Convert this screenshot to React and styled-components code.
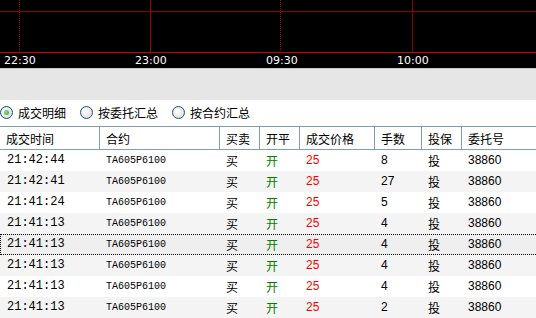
import React from 'react';
import styled, { createGlobalStyle } from 'styled-components';

const GlobalStyle = createGlobalStyle`
    body {
        margin: 0;
        background: #fff;
        overflow: hidden;
        font-family: "Liberation Sans", "Noto Sans CJK SC", sans-serif;
    }
`;

const Page = styled.div`
    width: 536px;
    height: 318px;
    overflow: hidden;
    display: flex;
    flex-direction: column;
`;

const Chart = styled.div`
    background: #000;
    display: flex;
    flex-direction: column;
    svg {
        display: block;
    }
`;

const Axis = styled.div`
    display: flex;
    height: 15px;
    align-items: center;
    padding-left: 4px;
    color: #fff;
    font-family: "DejaVu Sans", sans-serif;
    font-size: 11px;
    span {
        width: 131px;
        flex: none;
    }
`;

const Strip = styled.div`
    height: 31px;
    border-top: 1px solid #c8c8c8;
    background: #e6e6e6;
`;

const Radios = styled.div`
    height: 27px;
    display: flex;
    align-items: center;
    gap: 14px;
    font-size: 12px;
    font-family: "Noto Sans CJK SC", sans-serif;
`;

const RadioItem = styled.label`
    display: flex;
    align-items: center;
    gap: 5px;
`;

const RadioDot = styled.span`
    width: 11px;
    height: 11px;
    border-radius: 50%;
    border: 1px solid #1c5180;
    background: radial-gradient(circle at 40% 40%, #fff 0%, #e2e2dc 70%, #c9c9c0 100%);
    display: flex;
    align-items: center;
    justify-content: center;
    &::after {
        content: '';
        width: 5px;
        height: 5px;
        border-radius: 50%;
        background: ${p => (p.$on ? 'radial-gradient(circle at 40% 40%, #8fe28f, #21a121)' : 'transparent')};
    }
`;

const cols = '100px 120px 40px 40px 75px 47px 40px 74px';

const Header = styled.div`
    display: grid;
    grid-template-columns: ${cols};
    height: 22px;
    border-top: 1px solid #7f9db9;
    border-bottom: 1px solid #7f9db9;
    font-size: 12px;
    font-family: "Noto Sans CJK SC", sans-serif;
`;

const HeadCell = styled.div`
    display: flex;
    align-items: center;
    padding-left: 6px;
    border-right: ${p => (p.$last ? 'none' : '1px solid #7f9db9')};
`;

// the focused row runs past the right edge, so its dotted frame is open there
const Row = styled.div`
    display: grid;
    grid-template-columns: ${cols};
    height: 21px;
    flex: none;
    margin-right: ${p => (p.$selected ? '-4px' : '0')};
    background: ${p => (p.$selected ? '#efefef' : p.$alt ? '#f4f4f4' : '#fff')};
    outline: ${p => (p.$selected ? '1px dotted #000' : 'none')};
    outline-offset: -1px;
`;

const Cell = styled.div`
    display: flex;
    align-items: center;
    padding-left: ${p => p.$pad || 6}px;
    color: ${p => p.$color || '#000'};
    font-size: ${p => p.$size || 12}px;
    font-family: ${p =>
        p.$mono ? '"Liberation Mono", monospace' : p.$num ? '"Liberation Sans", sans-serif' : '"Noto Sans CJK SC", sans-serif'};
    white-space: nowrap;
`;

const rows = [
    ['21:42:44', '8'],
    ['21:42:41', '27'],
    ['21:41:24', '5'],
    ['21:41:13', '4'],
    ['21:41:13', '4'],
    ['21:41:13', '4'],
    ['21:41:13', '4'],
    ['21:41:13', '2'],
];

const ChartGrid = () => (
    <svg width="536" height="53">
        <line x1="0" y1="11.5" x2="536" y2="11.5" stroke="#8b0000" />
        <line x1="19.5" y1="0" x2="19.5" y2="52" stroke="#a00000" strokeDasharray="1 1" />
        <line x1="150.5" y1="0" x2="150.5" y2="52" stroke="#a00000" />
        <line x1="280.5" y1="0" x2="280.5" y2="52" stroke="#a00000" strokeDasharray="1 1" />
        <line x1="412.5" y1="0" x2="412.5" y2="52" stroke="#8b0000" />
        <line x1="0" y1="52.5" x2="536" y2="52.5" stroke="#d00000" />
    </svg>
);

const App = () => {
    return (
        <Page>
            <GlobalStyle />
            <Chart>
                <ChartGrid />
                <Axis>
                    <span>22:30</span>
                    <span>23:00</span>
                    <span>09:30</span>
                    <span>10:00</span>
                </Axis>
            </Chart>
            <Strip />
            <Radios>
                <RadioItem><RadioDot $on />成交明细</RadioItem>
                <RadioItem><RadioDot />按委托汇总</RadioItem>
                <RadioItem><RadioDot />按合约汇总</RadioItem>
            </Radios>
            <Header>
                <HeadCell>成交时间</HeadCell>
                <HeadCell>合约</HeadCell>
                <HeadCell>买卖</HeadCell>
                <HeadCell>开平</HeadCell>
                <HeadCell>成交价格</HeadCell>
                <HeadCell>手数</HeadCell>
                <HeadCell>投保</HeadCell>
                <HeadCell $last>委托号</HeadCell>
            </Header>
            {rows.map((r, i) => (
                <Row key={i} $alt={i % 2 === 1} $selected={i === 4}>
                    <Cell $mono $size={12} $pad={7}>{r[0]}</Cell>
                    <Cell $mono $size={10}>TA605P6100</Cell>
                    <Cell>买</Cell>
                    <Cell $color="#008000">开</Cell>
                    <Cell $num $color="#ff0000" $size={12}>25</Cell>
                    <Cell $num $size={12}>{r[1]}</Cell>
                    <Cell>投</Cell>
                    <Cell $num $size={12}>38860</Cell>
                </Row>
            ))}
        </Page>
    );
};

export default App;
